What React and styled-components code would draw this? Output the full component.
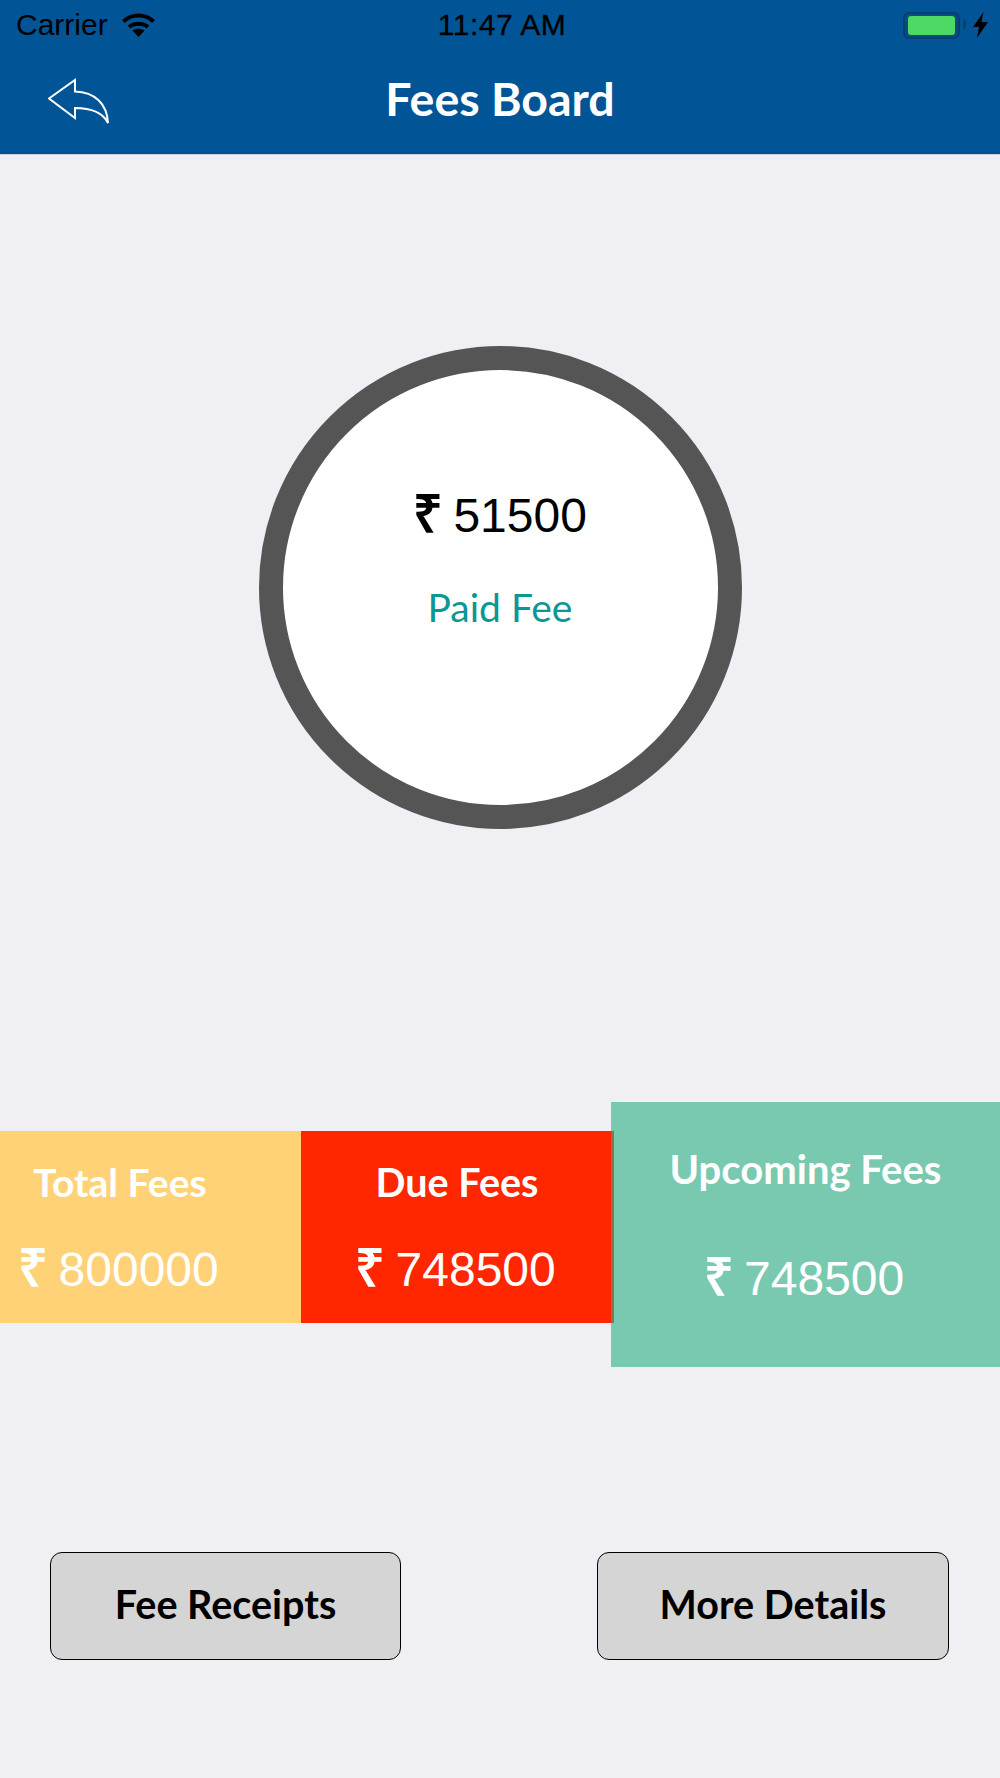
import React from 'react'
import styled, { createGlobalStyle } from 'styled-components'

const GlobalStyle = createGlobalStyle`
  html, body { margin: 0; padding: 0; background: #efeff4; }
  * { box-sizing: border-box; }
`

const SANS = `"Liberation Sans", Arial, sans-serif`
const TITLE = `Lato, "Open Sans", sans-serif`

const Page = styled.div`
  width: 1000px;
  height: 1778px;
  overflow: hidden;
  display: flex;
  flex-direction: column;
  background: #efeff4;
`

const Header = styled.header`
  height: 155px;
  background: #015596;
  border-bottom: 1px solid #c9d3dd;
  display: flex;
  flex-direction: column;
`

const StatusBar = styled.div`
  height: 50px;
  padding: 0 12px 0 16px;
  display: grid;
  grid-template-columns: 1fr auto 1fr;
  align-items: center;
  font-family: ${SANS};
  font-size: 30px;
  color: #000;
`

const StatusLeft = styled.div`
  display: flex;
  align-items: center;
  gap: 14px;
`

const StatusTime = styled.div`
  letter-spacing: 0.5px;
  -webkit-text-stroke: 0.3px #000;
`

const StatusRight = styled.div`
  display: flex;
  align-items: center;
  justify-content: flex-end;
`

const Battery = styled.div`
  position: relative;
  width: 57px;
  height: 27px;
  margin-right: 13px;
  padding: 2px 3px;
  border: 2px solid #0a3f70;
  border-radius: 6px;
  background: #0a4b85;

  &::after {
    content: '';
    position: absolute;
    top: 6px;
    right: -8px;
    width: 3px;
    height: 9px;
    border-radius: 0 3px 3px 0;
    background: #0a3f70;
  }
`

const BatteryFill = styled.div`
  height: 100%;
  border-radius: 3px;
  background: #4cd964;
`

const NavBar = styled.div`
  flex: 1;
  padding-left: 48px;
  display: grid;
  grid-template-columns: 62px 1fr 110px;
  align-items: center;
`

const Title = styled.h1`
  margin: 0 0 8px;
  text-align: center;
  font-family: ${TITLE};
  font-size: 46.5px;
  font-weight: 700;
  color: #fff;
`

const Main = styled.main`
  display: flex;
  flex-direction: column;
`

const Ring = styled.div`
  width: 483px;
  height: 483px;
  margin: 191px auto 0;
  padding-top: 119px;
  border: 24px solid #555;
  border-radius: 50%;
  background: #fff;
  display: flex;
  flex-direction: column;
  align-items: center;
`

const Amount = styled.div`
  padding-right: ${p => p.$nudge || 0}px;
  font-family: ${SANS};
  font-size: 48px;
  line-height: 54px;
  white-space: nowrap;
  color: ${p => p.$color || '#fff'};
`

const Rupee = styled.span`
  margin-right: -3px;
  font-size: 52px;
  font-weight: 700;
  line-height: 0;
`

const PaidLabel = styled.div`
  margin-top: 39px;
  font-family: ${TITLE};
  font-size: 39px;
  line-height: 50px;
  color: #0c9795;
`

const Cards = styled.div`
  margin-top: 273px;
  display: flex;
  align-items: flex-start;
`

const Card = styled.div`
  position: relative;
  width: ${p => p.$width}px;
  height: ${p => p.$height}px;
  margin-top: ${p => p.$top || 0}px;
  margin-left: ${p => p.$overlap || 0}px;
  padding: ${p => p.$padTop}px ${p => p.$padRight || 0}px 0 0;
  background: ${p => p.$bg};
  display: flex;
  flex-direction: column;
  align-items: center;
  color: #fff;
`

// the red card's edge showing through on the green one
const Seam = styled.div`
  position: absolute;
  top: 29px;
  left: 0;
  width: 3px;
  height: 192px;
  background: #7f7a4e;
`

const CardTitle = styled.div`
  margin-bottom: ${p => p.$gap}px;
  font-family: ${TITLE};
  font-size: ${p => p.$size}px;
  font-weight: 700;
  line-height: 48px;
  white-space: nowrap;
`

const Buttons = styled.div`
  margin-top: 185px;
  padding: 0 51px 0 50px;
  display: flex;
  justify-content: space-between;
`

const ActionButton = styled.button`
  width: 351px;
  height: 108px;
  padding: 0 0 5px;
  border: 1px solid #000;
  border-radius: 12px;
  background: #d5d5d5;
  font-family: ${TITLE};
  font-size: 39.5px;
  font-weight: 700;
  color: #000;

  & + & {
    width: 352px;
  }
`

const WifiIcon = () => (
  <svg width="33" height="24" viewBox="0 0 33 24" fill="none" stroke="#000" strokeWidth="4">
    <path d="M1.5 8.5C9.5 0.5 23.5 0.5 31.5 8.5" />
    <path d="M7 14C12 9.5 21 9.5 26 14" />
    <path d="M16.5 24L10.5 17.5C14 15 19 15 22.5 17.5Z" fill="#000" stroke="none" />
  </svg>
)

const BoltIcon = () => (
  <svg width="15" height="26" viewBox="0 0 15 26" fill="#000">
    <path d="M10.5 0L0 15H6L4 26L15 10H8.5Z" />
  </svg>
)

const BackIcon = () => (
  <svg width="62" height="48" viewBox="0 0 62 48" fill="none" stroke="#fff" strokeWidth="2">
    <path d="M1 20.5L27 2V13.5C47 14 59 26 60 45C55 35 44 30 27 30V40Z" />
  </svg>
)

const Money = ({ value, color, nudge }) => (
  <Amount $color={color} $nudge={nudge}>
    <Rupee>₹</Rupee> {value}
  </Amount>
)

const cards = [
  { title: 'Total Fees', value: '800000', bg: '#ffd278', width: 301, height: 192, top: 29, padTop: 27, padRight: 61, gap: 37, size: 39 },
  { title: 'Due Fees', value: '748500', bg: '#ff2600', width: 312, height: 192, top: 29, padTop: 27, gap: 37, size: 39.5 },
  { title: 'Upcoming Fees', value: '748500', bg: '#79c9b0', width: 389, height: 265, overlap: -2, padTop: 43, gap: 59, size: 40, seam: true },
]

const App = () => {
  return (
    <Page>
      <GlobalStyle />
      <Header>
        <StatusBar>
          <StatusLeft>
            Carrier
            <WifiIcon />
          </StatusLeft>
          <StatusTime>11:47 AM</StatusTime>
          <StatusRight>
            <Battery>
              <BatteryFill />
            </Battery>
            <BoltIcon />
          </StatusRight>
        </StatusBar>
        <NavBar>
          <BackIcon />
          <Title>Fees Board</Title>
        </NavBar>
      </Header>
      <Main>
        <Ring>
          <Money value="51500" color="#000" />
          <PaidLabel>Paid Fee</PaidLabel>
        </Ring>
        <Cards>
          {cards.map(c => (
            <Card
              key={c.title}
              $bg={c.bg}
              $width={c.width}
              $height={c.height}
              $top={c.top}
              $overlap={c.overlap}
              $padTop={c.padTop}
              $padRight={c.padRight}
            >
              {c.seam && <Seam />}
              <CardTitle $gap={c.gap} $size={c.size}>{c.title}</CardTitle>
              <Money value={c.value} nudge={3} />
            </Card>
          ))}
        </Cards>
        <Buttons>
          <ActionButton>Fee Receipts</ActionButton>
          <ActionButton>More Details</ActionButton>
        </Buttons>
      </Main>
    </Page>
  )
}

export default App
